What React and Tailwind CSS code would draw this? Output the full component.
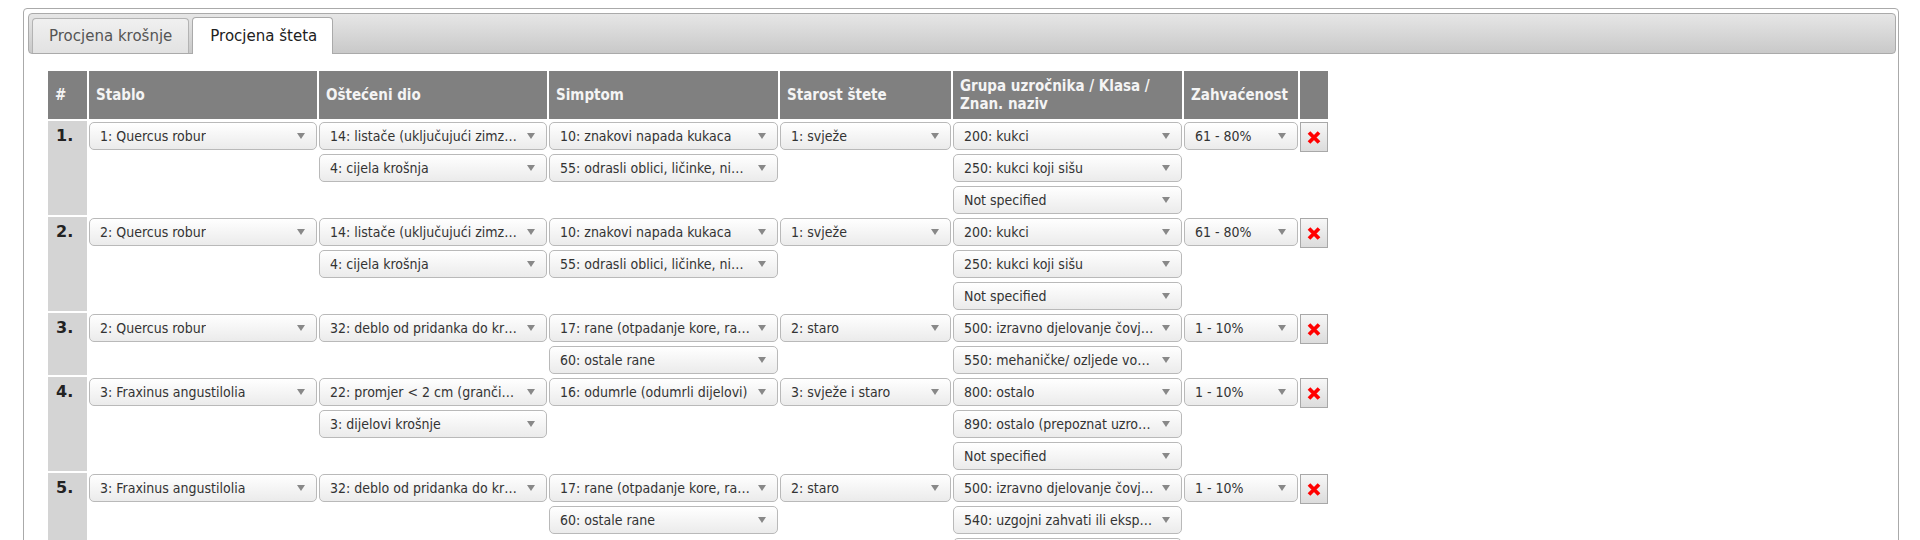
import { useState } from 'react';

const rows = [
  {
    n: '1.',
    stablo: ['1: Quercus robur'],
    dio: ['14: listače (uključujući zimz…', '4: cijela krošnja'],
    simptom: ['10: znakovi napada kukaca', '55: odrasli oblici, ličinke, ni…'],
    starost: ['1: svježe'],
    grupa: ['200: kukci', '250: kukci koji sišu', 'Not specified'],
    zahv: ['61 - 80%'],
  },
  {
    n: '2.',
    stablo: ['2: Quercus robur'],
    dio: ['14: listače (uključujući zimz…', '4: cijela krošnja'],
    simptom: ['10: znakovi napada kukaca', '55: odrasli oblici, ličinke, ni…'],
    starost: ['1: svježe'],
    grupa: ['200: kukci', '250: kukci koji sišu', 'Not specified'],
    zahv: ['61 - 80%'],
  },
  {
    n: '3.',
    stablo: ['2: Quercus robur'],
    dio: ['32: deblo od pridanka do kr…'],
    simptom: ['17: rane (otpadanje kore, ra…', '60: ostale rane'],
    starost: ['2: staro'],
    grupa: ['500: izravno djelovanje čovj…', '550: mehaničke/ ozljede vo…'],
    zahv: ['1 - 10%'],
  },
  {
    n: '4.',
    stablo: ['3: Fraxinus angustilolia'],
    dio: ['22: promjer < 2 cm (granči…', '3: dijelovi krošnje'],
    simptom: ['16: odumrle (odumrli dijelovi)'],
    starost: ['3: svježe i staro'],
    grupa: ['800: ostalo', '890: ostalo (prepoznat uzro…', 'Not specified'],
    zahv: ['1 - 10%'],
  },
  {
    n: '5.',
    stablo: ['3: Fraxinus angustilolia'],
    dio: ['32: deblo od pridanka do kr…'],
    simptom: ['17: rane (otpadanje kore, ra…', '60: ostale rane'],
    starost: ['2: staro'],
    grupa: ['500: izravno djelovanje čovj…', '540: uzgojni zahvati ili eksp…', 'Not specified'],
    zahv: ['1 - 10%'],
  },
];

function Select({ value }) {
  return (
    <div className="flex h-[28px] items-center justify-between rounded-[5px] border border-[#b9b9b9] bg-linear-to-b from-white to-[#ebebeb] pl-[10px] pr-[11px] text-[14px] text-[#333]">
      <span className="overflow-hidden whitespace-nowrap">{value}</span>
      <svg width="8" height="6" viewBox="0 0 8 6" className="ml-1 shrink-0">
        <path d="M0 0 L8 0 L4 6 Z" fill="#888" />
      </svg>
    </div>
  );
}

function Stack({ items }) {
  return (
    <div className="flex flex-col gap-[4px]">
      {items.map((v, i) => (
        <Select key={i} value={v} />
      ))}
    </div>
  );
}

function DeleteButton() {
  return (
    <button className="flex h-[30px] w-[28px] items-center justify-center border border-[#a8a8a8] bg-linear-to-b from-[#f7f7f7] to-[#dcdcdc]">
      <svg width="14" height="13" viewBox="0 0 14 13">
        <path d="M2 1.5 L12 11.5 M12 1.5 L2 11.5" stroke="#f00" strokeWidth="3.8" />
      </svg>
    </button>
  );
}

const headers = [
  { label: '#', w: 'w-[39px]' },
  { label: 'Stablo', w: 'w-[228px]' },
  { label: 'Oštećeni dio', w: 'w-[228px]' },
  { label: 'Simptom', w: 'w-[229px]' },
  { label: 'Starost štete', w: 'w-[171px]' },
  { label: 'Grupa uzročnika / Klasa / Znan. naziv', w: 'w-[229px]' },
  { label: 'Zahvaćenost', w: 'w-[114px]' },
  { label: '', w: 'w-[28px]' },
];

export default function App() {
  const [tab, setTab] = useState(1);
  const tabs = ['Procjena krošnje', 'Procjena šteta'];

  return (
    <div className="bg-white pl-[23px] pr-[21px] pt-[8px] font-['DejaVu_Sans_Condensed','DejaVu_Sans',sans-serif]">
      <div className="min-h-[600px] rounded-[4px] border border-[#aaa] pb-4 pl-[4px] pr-[2px] pt-[4px]">
        <div className="flex h-[41px] items-end gap-[3px] rounded-[4px] border border-[#aaa] bg-linear-to-b from-[#e6e6e6] to-[#c9c9c9] px-[3px]">
          {tabs.map((t, i) => (
            <button
              key={t}
              onClick={() => setTab(i)}
              className={
                i === tab
                  ? "mb-[-1px] flex h-[37px] items-center rounded-t-[4px] border border-b-0 border-[#aaa] bg-white pl-[17px] pr-[15px] font-['DejaVu_Sans',sans-serif] text-[15px] text-[#212121]"
                  : "flex h-[35px] items-center rounded-t-[4px] border border-b-0 border-[#b3b3b3] bg-linear-to-b from-[#f0f0f0] to-[#e2e2e2] px-[16px] font-['DejaVu_Sans',sans-serif] text-[15px] text-[#555]"
              }
            >
              {t}
            </button>
          ))}
        </div>

        <div className="pl-[18px] pt-[15px]">
          <table className="border-separate border-spacing-[2px]">
            <thead>
              <tr>
                {headers.map((h, i) => (
                  <th
                    key={i}
                    className={`${h.w} h-[48px] bg-[#808080] px-[7px] text-left align-middle text-[15px] font-bold leading-[18px] text-[#f4f4f4]`}
                  >
                    {h.label}
                  </th>
                ))}
              </tr>
            </thead>
            <tbody>
              {rows.map((r) => (
                <tr key={r.n}>
                  <td className="bg-[#d4d4d4] pl-[8px] pt-[1px] align-top font-['DejaVu_Sans',sans-serif] text-[16px] font-bold leading-[28px] text-[#222]">
                    {r.n}
                  </td>
                  <td className="py-[1px] align-top"><Stack items={r.stablo} /></td>
                  <td className="py-[1px] align-top"><Stack items={r.dio} /></td>
                  <td className="py-[1px] align-top"><Stack items={r.simptom} /></td>
                  <td className="py-[1px] align-top"><Stack items={r.starost} /></td>
                  <td className="py-[1px] align-top"><Stack items={r.grupa} /></td>
                  <td className="py-[1px] align-top"><Stack items={r.zahv} /></td>
                  <td className="py-[1px] align-top"><DeleteButton /></td>
                </tr>
              ))}
            </tbody>
          </table>
        </div>
      </div>
    </div>
  );
}
